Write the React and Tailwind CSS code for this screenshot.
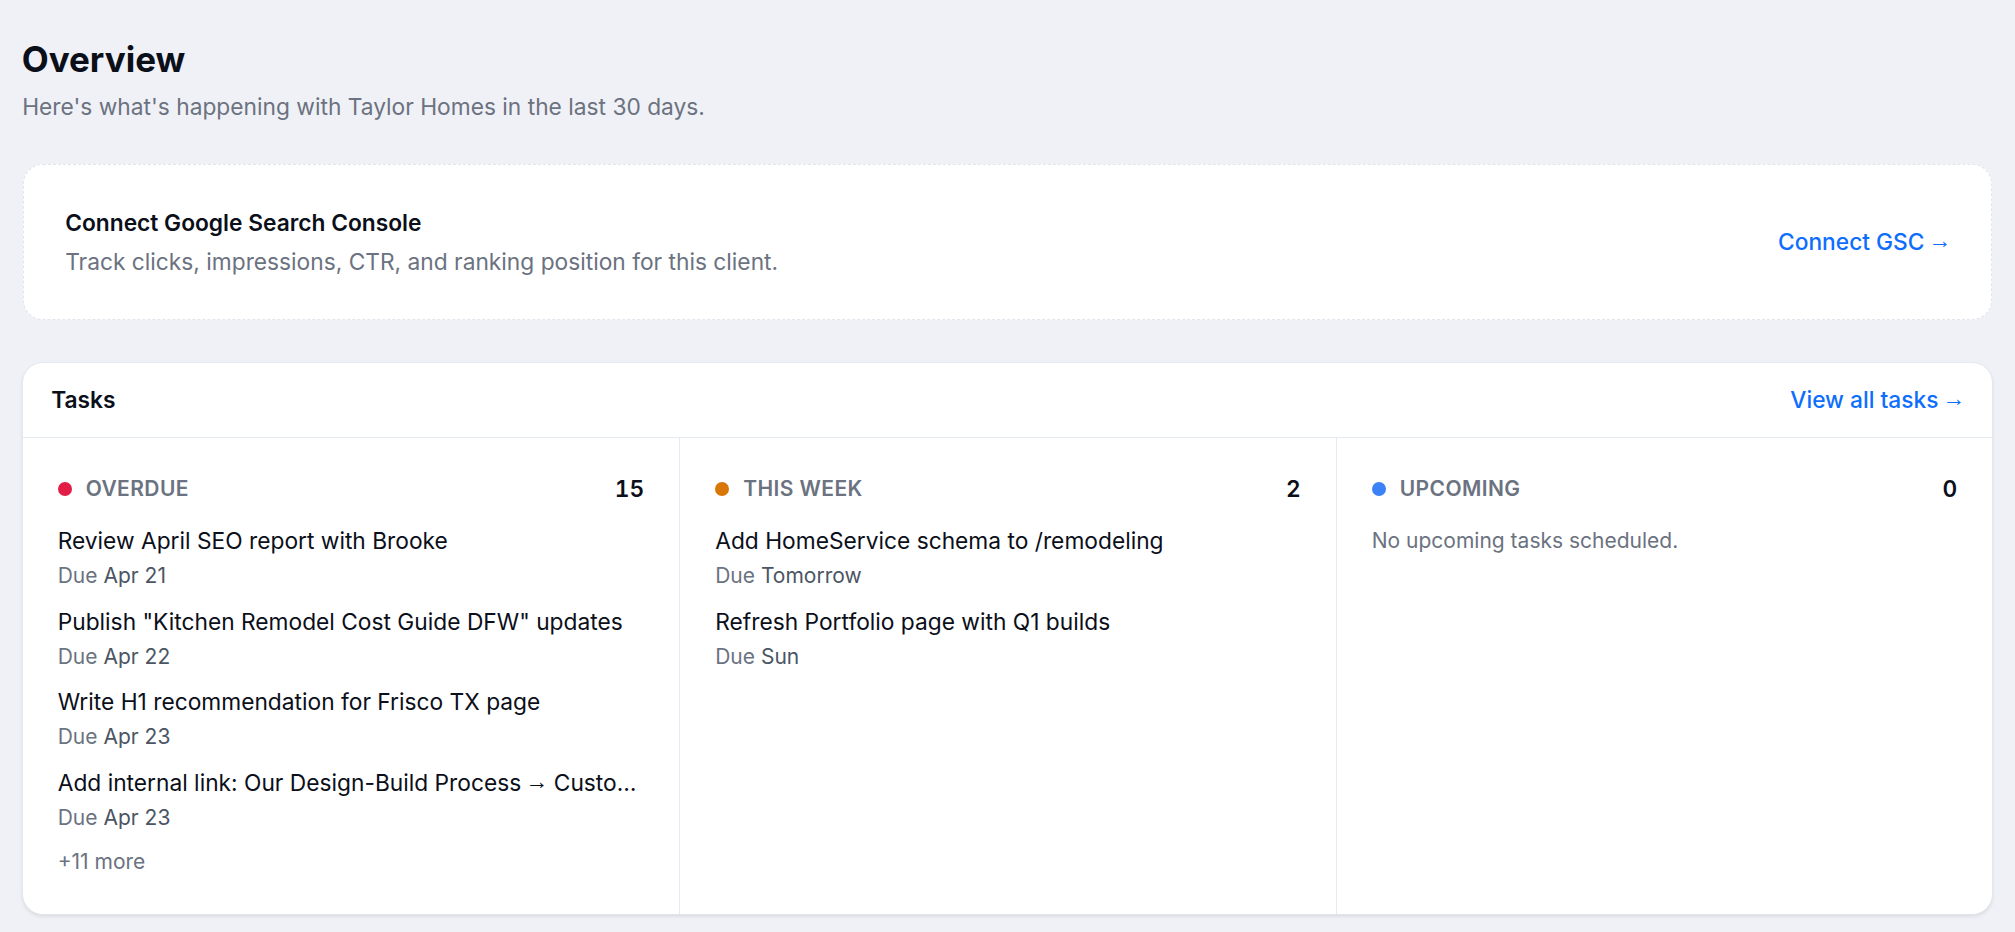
const arrow = <span className="relative -top-[1.5px] -mr-[1px] -ml-[2px] font-['Liberation_Sans',sans-serif]">→</span>;

const overdue = [
  ['Review April SEO report with Brooke', 'Apr 21'],
  ['Publish "Kitchen Remodel Cost Guide DFW" updates', 'Apr 22'],
  ['Write H1 recommendation for Frisco TX page', 'Apr 23'],
  [<>Add internal link: Our Design-Build Process {arrow} Custom Homes page</>, 'Apr 23'],
];
const week = [
  ['Add HomeService schema to /remodeling', 'Tomorrow'],
  ['Refresh Portfolio page with Q1 builds', 'Sun'],
];

function Task({ title, due }) {
  return (
    <div className="mb-[13.67px]">
      <div className="truncate text-[22.75px] leading-[34px] font-normal text-[#0b0f1a]">{title}</div>
      <div className="mt-[3px] text-[21px] leading-[30px] text-[#6b7280]">
        Due <span className="text-[#4b5563]">{due}</span>
      </div>
    </div>
  );
}

function Head({ color, label, count }) {
  return (
    <div className="mb-[20px] flex h-[30px] items-center justify-between">
      <div className="flex items-center gap-[14px]">
        <span className={`h-[14px] w-[14px] rounded-full ${color}`} />
        <span className="text-[21px] font-semibold tracking-[0.4px] text-[#6b7280]">{label}</span>
      </div>
      <span className="text-[22.75px] font-semibold text-[#0b0f1a] tabular-nums">{count}</span>
    </div>
  );
}

export default function App() {
  return (
    <div className="min-h-[932px] bg-[#f0f1f6] px-[22.7px] pt-[35px] font-['Inter',sans-serif]">
      <h1 className="-ml-[1px] text-[35px] leading-[48px] font-bold text-[#0b0f1a]">Overview</h1>
      <p className="mt-[7px] -ml-[0.5px] text-[22.75px] leading-[34px] text-[#6b7280]">Here's what's happening with Taylor Homes in the last 30 days.</p>

      <div className="mt-[40px] flex h-[155.5px] items-center justify-between rounded-[20px] border border-dashed border-[#e2e5ec] bg-white pr-[41px] pl-[41.5px]">
        <div className="pt-[1px]">
          <div className="text-[22.75px] leading-[34px] font-semibold text-[#0b0f1a]">Connect Google Search Console</div>
          <div className="mt-[5px] text-[22.75px] leading-[34px] text-[#6b7280]">Track clicks, impressions, CTR, and ranking position for this client.</div>
        </div>
        <span className="text-[22.75px] font-medium whitespace-nowrap text-[#0d6efd]">Connect GSC {arrow}</span>
      </div>

      <div className="mt-[43.5px] overflow-hidden rounded-[20px] bg-white shadow-[0_0_0_1px_rgba(226,232,240,0.6),0_2px_4px_rgba(15,23,42,0.12)]">
        <div className="flex h-[75px] items-center justify-between border-b border-[#e5e9f2] pr-[28px] pl-[28.5px]">
          <span className="text-[22.75px] font-semibold text-[#0b0f1a]">Tasks</span>
          <span className="text-[22.75px] font-medium whitespace-nowrap text-[#0d6efd]">View all tasks {arrow}</span>
        </div>
        <div className="grid h-[476px] grid-cols-3">
          <div className="min-w-0 px-[35px] pt-[36px]">
            <Head color="bg-[#e11d48]" label="OVERDUE" count="15" />
            {overdue.map(([t, d]) => <Task key={d + String(t).length} title={t} due={d} />)}
            <div className="mt-[3px] text-[21px] leading-[30px] text-[#6b7280]">+11 more</div>
          </div>
          <div className="min-w-0 border-l border-[#e5e9f2] px-[35px] pt-[36px]">
            <Head color="bg-[#d97706]" label="THIS WEEK" count="2" />
            {week.map(([t, d]) => <Task key={d} title={t} due={d} />)}
          </div>
          <div className="min-w-0 border-l border-[#e5e9f2] px-[35px] pt-[36px]">
            <Head color="bg-[#3b82f6]" label="UPCOMING" count="0" />
            <div className="text-[21px] leading-[34px] text-[#6b7280]">No upcoming tasks scheduled.</div>
          </div>
        </div>
      </div>
    </div>
  );
}
